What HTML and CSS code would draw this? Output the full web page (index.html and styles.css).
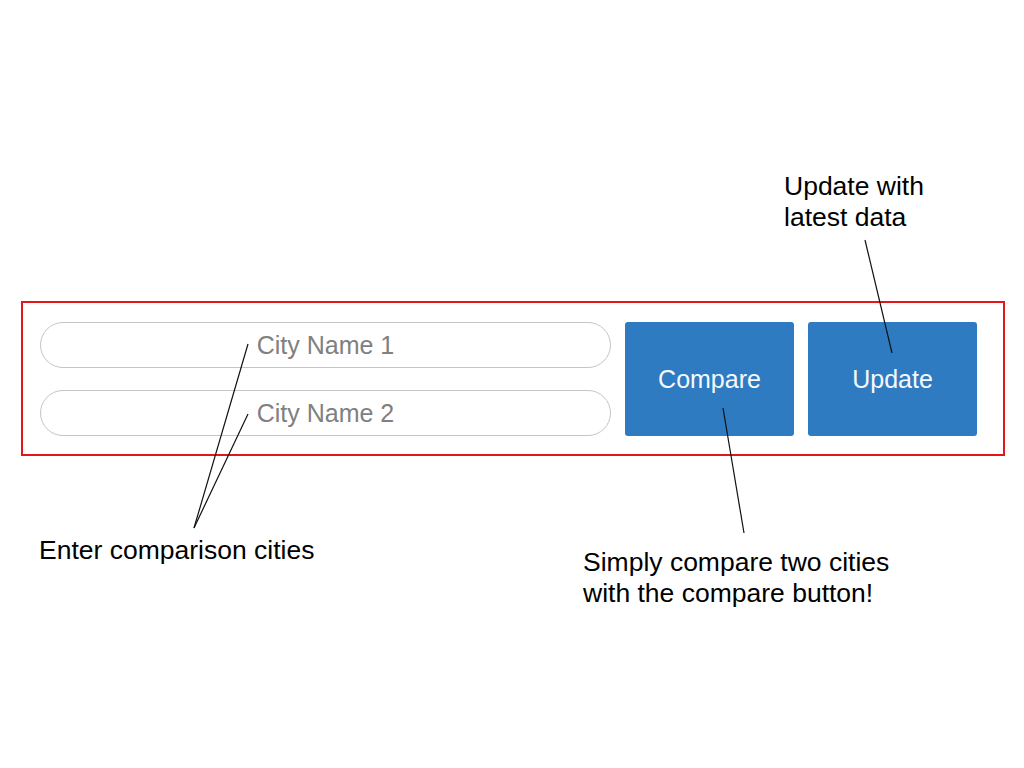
FILE: index.html
```html
<!DOCTYPE html>
<html lang="en">
<head>
<meta charset="utf-8">
<title>City Compare Wireframe</title>
<link rel="stylesheet" href="styles.css">
</head>
<body>
<div class="page">
  <div class="note note-top">Update with<br>latest data</div>

  <div class="frame">
    <div class="fields">
      <div class="field">City Name 1</div>
      <div class="field">City Name 2</div>
    </div>
    <button class="btn btn-compare" type="button">Compare</button>
    <button class="btn btn-update" type="button">Update</button>
  </div>

  <div class="notes-bottom">
    <div class="note note-cities">Enter comparison cities</div>
    <div class="note note-compare">Simply compare two cities<br>with the compare button!</div>
  </div>

  <svg class="leaders" width="1024" height="768" viewBox="0 0 1024 768" aria-hidden="true">
    <line x1="248" y1="344" x2="194" y2="528"/>
    <line x1="248" y1="414" x2="194" y2="528"/>
    <line x1="723" y1="408" x2="744" y2="533"/>
    <line x1="865" y1="240" x2="892" y2="353"/>
  </svg>
</div>
</body>
</html>
```

FILE: styles.css
```css
* { box-sizing: border-box; }

html, body {
  margin: 0;
  padding: 0;
  background: #ffffff;
}

body {
  font-family: "Liberation Sans", Arial, sans-serif;
  color: #000000;
}

.page {
  position: relative;
  width: 1024px;
  height: 768px;
  overflow: hidden;
  padding-top: 171px;
}

.note {
  font-size: 26.5px;
  line-height: 31px;
  color: #000000;
}

.note-top {
  margin-left: 784px;
}

.frame {
  margin-top: 68px;
  margin-left: 21px;
  width: 984px;
  height: 155px;
  border: 2px solid #e5161b;
  display: flex;
  align-items: flex-start;
  padding: 19px 26px 0 17px;
}

.fields {
  width: 571px;
  display: flex;
  flex-direction: column;
  gap: 22px;
}

.field {
  height: 46px;
  border: 1.5px solid #c4c4c4;
  border-radius: 23px;
  display: flex;
  align-items: center;
  justify-content: center;
  font-size: 25px;
  color: #808080;
}

.btn {
  width: 169px;
  height: 114px;
  border: none;
  border-radius: 3px;
  background: #2e7bc2;
  color: #f6f9fc;
  font-family: "Liberation Sans", Arial, sans-serif;
  font-size: 25px;
  padding: 0;
}

.btn-compare {
  margin-left: 14px;
}

.btn-update {
  margin-left: 14px;
}

.notes-bottom {
  display: flex;
  align-items: flex-start;
  padding-left: 39px;
}

.note-cities {
  width: 544px;
  margin-top: 79px;
}

.note-compare {
  margin-top: 91px;
}

.leaders {
  position: absolute;
  left: 0;
  top: 0;
  pointer-events: none;
}

.leaders line {
  stroke: #111111;
  stroke-width: 1.2;
}
```
